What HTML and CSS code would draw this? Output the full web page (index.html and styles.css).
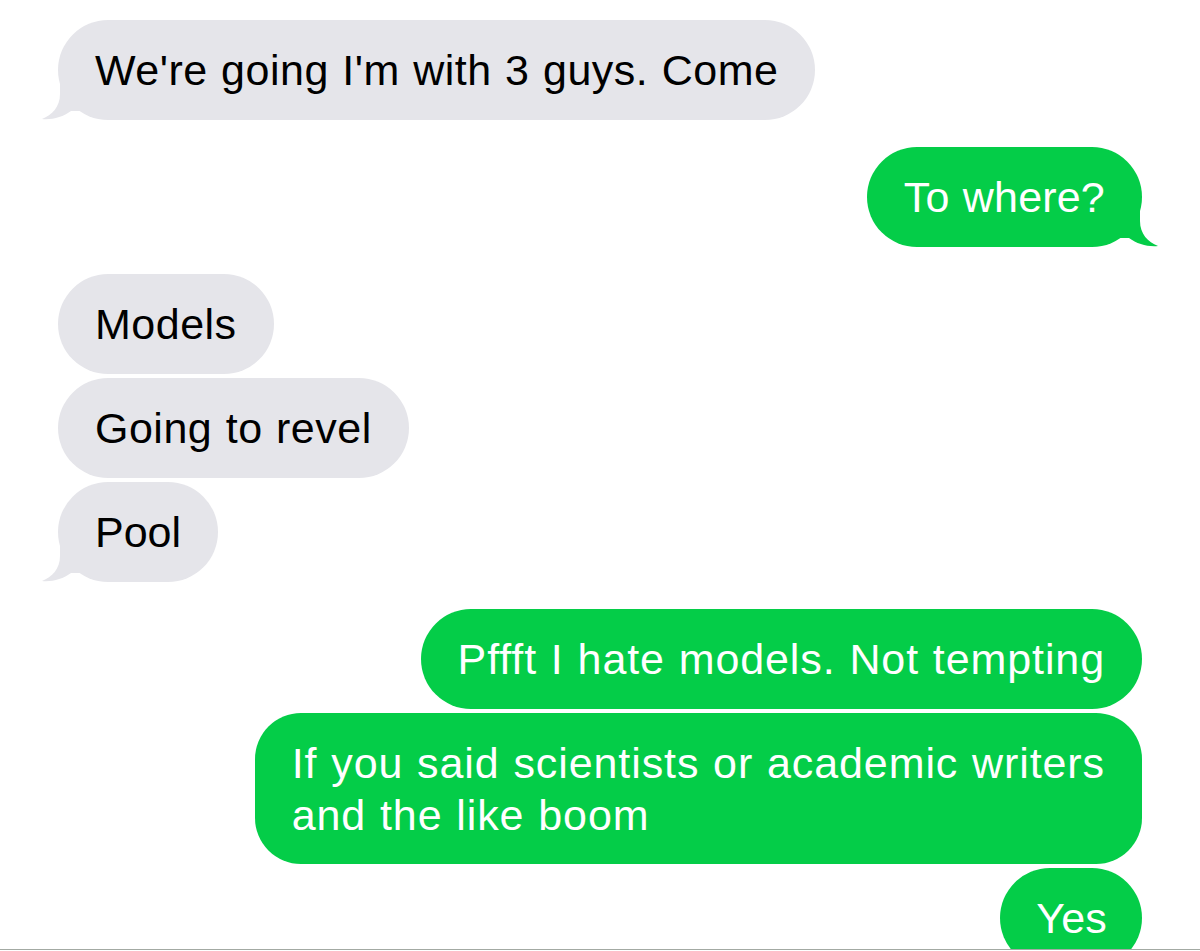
FILE: index.html
```html
<!DOCTYPE html>
<html>
<head>
<meta charset="utf-8">
<link rel="stylesheet" href="styles.css">
</head>
<body>
<div class="chat">
  <div class="group">
    <div class="bubble in tail">We're going I'm with 3 guys. Come
      <svg class="tail-svg tail-left" viewBox="0 0 40 40"><path d="M20 0 L20 14 C20 27 12 35 2 39 C12 40 23 37 31 31 L40 31 L40 0 Z"/></svg>
    </div>
  </div>
  <div class="group">
    <div class="bubble out tail short-out">To where?
      <svg class="tail-svg tail-right" viewBox="0 0 40 40"><path d="M20 0 L20 14 C20 27 28 35 38 39 C28 40 17 37 9 31 L0 31 L0 0 Z"/></svg>
    </div>
  </div>
  <div class="group">
    <div class="bubble in">Models</div>
    <div class="bubble in">Going to revel</div>
    <div class="bubble in tail narrow">Pool
      <svg class="tail-svg tail-left" viewBox="0 0 40 40"><path d="M20 0 L20 14 C20 27 12 35 2 39 C12 40 23 37 31 31 L40 31 L40 0 Z"/></svg>
    </div>
  </div>
  <div class="group">
    <div class="bubble out">Pffft I hate models. Not tempting</div>
    <div class="bubble out multi">If you said scientists or academic writers<br>and the like boom</div>
    <div class="bubble out short">Yes</div>
  </div>
</div>
</body>
</html>
```
FILE: styles.css
```css
html, body {
  margin: 0;
  padding: 0;
  background: #ffffff;
}
body {
  font-family: "Liberation Sans", Arial, sans-serif;
}
.chat {
  height: 950px;
  overflow: hidden;
  border-bottom: 1px solid #a3aaa3;
  padding: 20px 58px 0 58px;
  box-sizing: border-box;
  display: flex;
  flex-direction: column;
  gap: 27px;
}
.group {
  display: flex;
  flex-direction: column;
  gap: 4px;
}
.bubble {
  position: relative;
  font-size: 43px;
  word-spacing: 1px;
  line-height: 50px;
  padding: 25px 37px;
  border-radius: 50px;
  max-width: max-content;
  white-space: nowrap;
}
.bubble.multi {
  padding: 24px 37px 23px;
  line-height: 52px;
  border-radius: 46px;
}
.in {
  align-self: flex-start;
  background: #e5e5ea;
  color: #000000;
  letter-spacing: 0.5px;
}
.out {
  align-self: flex-end;
  background: #04cd48;
  color: #ffffff;
  letter-spacing: 0.9px;
}
.bubble.short {
  padding: 25px 35px 25px 36px;
  letter-spacing: 0.2px;
}
.bubble.short-out {
  letter-spacing: 0.2px;
}
.bubble.narrow {
  letter-spacing: 0;
}
.tail-svg {
  position: absolute;
  bottom: 0;
  width: 40px;
  height: 40px;
}
.tail-left {
  left: -18px;
  fill: #e5e5ea;
}
.tail-right {
  right: -18px;
  fill: #04cd48;
}
```
